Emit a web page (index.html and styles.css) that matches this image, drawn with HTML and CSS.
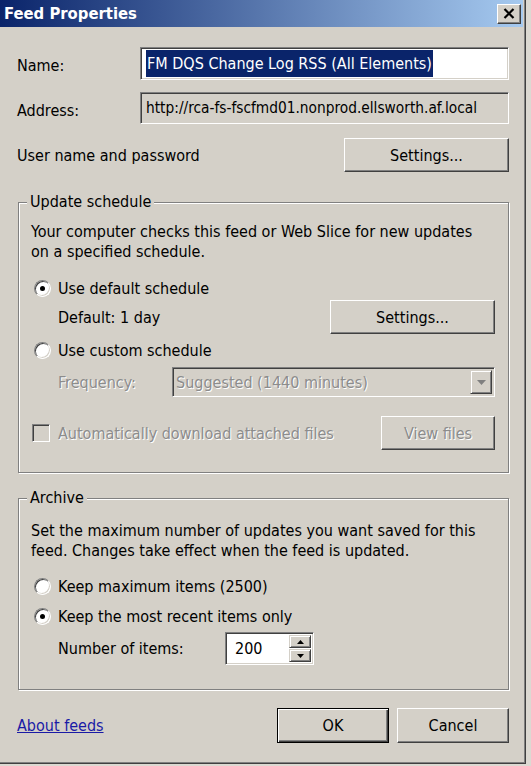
FILE: index.html
```html
<!DOCTYPE html>
<html>
<head>
<meta charset="utf-8">
<title>Feed Properties</title>
<link rel="stylesheet" href="styles.css">
</head>
<body>
<div class="window">
  <div class="titlebar">
    <span class="title">Feed Properties</span>
    <span class="close"><svg width="12" height="11" viewBox="0 0 12 11"><path d="M1.5 1 L10.5 10 M10.5 1 L1.5 10" stroke="#000" stroke-width="2.2"/></svg></span>
  </div>
  <div class="content">
    <div class="row row-name">
      <span class="label">Name:</span>
      <div class="field field-white"><span class="selected">FM DQS Change Log RSS (All Elements)</span></div>
    </div>
    <div class="row row-address">
      <span class="label">Address:</span>
      <div class="field field-readonly"><span class="address">http://rca-fs-fscfmd01.nonprod.ellsworth.af.local</span></div>
    </div>
    <div class="row row-user">
      <span>User name and password</span>
      <button class="btn btn-user">Settings...</button>
    </div>

    <div class="group group-update">
      <span class="legend">Update schedule</span>
      <p class="desc">Your computer checks this feed or Web Slice for new updates<br>on a specified schedule.</p>
      <div class="opt opt-1"><span class="radio checked"></span><span>Use default schedule</span></div>
      <div class="sub sub-default"><span>Default: 1 day</span><button class="btn btn-sched">Settings...</button></div>
      <div class="opt opt-2"><span class="radio"></span><span>Use custom schedule</span></div>
      <div class="sub sub-freq">
        <span class="freq-label disabled">Frequency:</span>
        <div class="select">
          <span class="select-text disabled">Suggested (1440 minutes)</span>
          <span class="select-btn"><svg width="9" height="5" viewBox="0 0 9 5"><path d="M0 0 H9 L4.5 5 Z" fill="#808080"/></svg></span>
        </div>
      </div>
      <div class="check-row">
        <span class="checkbox"></span>
        <span class="check-label disabled">Automatically download attached files</span>
        <button class="btn btn-view disabled">View files</button>
      </div>
    </div>

    <div class="group group-archive">
      <span class="legend">Archive</span>
      <p class="desc">Set the maximum number of updates you want saved for this<br>feed. Changes take effect when the feed is updated.</p>
      <div class="opt opt-3"><span class="radio"></span><span>Keep maximum items (2500)</span></div>
      <div class="opt opt-4"><span class="radio checked"></span><span>Keep the most recent items only</span></div>
      <div class="sub sub-num">
        <span class="num-label">Number of items:</span>
        <div class="spin">
          <span class="spin-value">200</span>
          <span class="spin-btns">
            <span class="spin-btn"><svg width="7" height="4" viewBox="0 0 7 4"><path d="M3.5 0 L7 4 H0 Z" fill="#000"/></svg></span>
            <span class="spin-btn"><svg width="7" height="4" viewBox="0 0 7 4"><path d="M0 0 H7 L3.5 4 Z" fill="#000"/></svg></span>
          </span>
        </div>
      </div>
    </div>

    <div class="bottom">
      <a class="link" href="#">About feeds</a>
      <div class="actions">
        <button class="btn btn-default">OK</button>
        <button class="btn btn-cancel">Cancel</button>
      </div>
    </div>
  </div>
</div>
</body>
</html>
```
FILE: styles.css
```css
* { box-sizing: border-box; }
html, body { margin: 0; padding: 0; }
body {
  width: 531px;
  height: 766px;
  overflow: hidden;
  background: #dcd9d2;
  font-family: "DejaVu Sans Condensed", "DejaVu Sans", sans-serif;
  font-size: 16px;
  color: #000;
}
.window {
  width: 526px;
  height: 764px;
  background: #d4d0c8;
  box-shadow: inset -1px -1px #404040, inset -2px -2px #808080;
  display: flex;
  flex-direction: column;
}
.titlebar {
  height: 27px;
  margin-right: 3px;
  background: linear-gradient(to right, #0a246a, #a6caf0);
  display: flex;
  align-items: center;
  justify-content: space-between;
  padding: 0 2px 0 4px;
}
.title {
  color: #fff;
  font-weight: bold;
  font-size: 16.5px;
}
.close {
  width: 24px;
  height: 20px;
  background: #d4d0c8;
  border: 1px solid;
  border-color: #fff #404040 #404040 #fff;
  box-shadow: inset -1px -1px #808080;
  display: flex;
  align-items: center;
  justify-content: center;
}
.content {
  padding: 0 17px;
  display: flex;
  flex-direction: column;
}
.row {
  display: flex;
  align-items: center;
}
.label { width: 123px; flex: none; padding-top: 4px; }
.row-name { margin-top: 20px; height: 33px; }
.row-address { margin-top: 12px; height: 32px; }
.row-user { margin-top: 14px; height: 34px; justify-content: space-between; }
.field {
  flex: 1;
  height: 100%;
  border: 1px solid;
  border-color: #808080 #fff #fff #808080;
  box-shadow: inset 1px 1px #404040, inset -1px -1px #d4d0c8;
  padding: 2px 5px;
  white-space: nowrap;
  overflow: hidden;
  display: flex;
  align-items: center;
}
.field-white { background: #fff; }
.field-readonly { background: #d4d0c8; }
.address { font-size: 15.3px; }
.selected {
  background: #0a246a;
  color: #fff;
  height: 100%;
  display: flex;
  align-items: center;
  padding: 0 1px;
}
.btn {
  font: inherit;
  color: #000;
  background: #d4d0c8;
  border: 1px solid;
  border-color: #fff #404040 #404040 #fff;
  box-shadow: inset -1px -1px #808080;
  padding: 0;
  height: 100%;
}
.btn-user { width: 165px; }
.group {
  position: relative;
  margin-left: 1px;
  border: 1px solid #808080;
  box-shadow: inset 1px 1px #fff, 1px 1px #fff;
  padding-left: 12px;
  padding-right: 13px;
  display: flex;
  flex-direction: column;
}
.legend {
  position: absolute;
  top: -10px;
  left: 8px;
  padding: 0 3px;
  line-height: 18px;
  background: #d4d0c8;
}
.group-update { margin-top: 30px; padding-top: 19px; padding-bottom: 22px; }
.group-archive { margin-top: 25px; padding-top: 22px; padding-bottom: 24px; }
.desc { margin: 0; line-height: 20px; }
.opt {
  height: 20px;
  display: flex;
  align-items: center;
  padding-left: 3px;
}
.opt-1 { margin-top: 16px; }
.opt-2 { margin-top: 6px; }
.opt-3 { margin-top: 15px; }
.opt-4 { margin-top: 10px; }
.radio {
  width: 17px;
  height: 17px;
  border-radius: 50%;
  border: 1px solid;
  border-color: #808080 #fff #fff #808080;
  background: #fff;
  box-shadow: inset 1px 1px #404040, inset -1px -1px #d4d0c8;
  margin-right: 7px;
  flex: none;
  display: flex;
  align-items: center;
  justify-content: center;
}
.radio.checked::after {
  content: "";
  width: 5px;
  height: 5px;
  border-radius: 50%;
  background: #000;
}
.sub {
  display: flex;
  align-items: center;
  padding-left: 27px;
}
.sub-default { margin-top: 2px; height: 34px; justify-content: space-between; }
.btn-sched { width: 165px; }
.sub-freq { margin-top: 7px; height: 30px; }
.freq-label { width: 114px; flex: none; }
.disabled {
  color: #8c8c8c;
  text-shadow: 1px 1px #fff;
}
.select {
  flex: 1;
  height: 100%;
  border: 1px solid;
  border-color: #808080 #fff #fff #808080;
  box-shadow: inset 1px 1px #404040, inset -1px -1px #d4d0c8;
  background: #d4d0c8;
  display: flex;
  align-items: center;
  justify-content: space-between;
  padding: 2px 2px 2px 3px;
}
.select-btn {
  width: 22px;
  height: 100%;
  border: 1px solid;
  border-color: #d4d0c8 #404040 #404040 #d4d0c8;
  box-shadow: inset 1px 1px #fff, inset -1px -1px #808080;
  display: flex;
  align-items: center;
  justify-content: center;
}
.check-row {
  margin-top: 19px;
  height: 34px;
  display: flex;
  align-items: center;
  padding-left: 1px;
}
.checkbox {
  width: 18px;
  height: 18px;
  flex: none;
  border: 1px solid;
  border-color: #808080 #fff #fff #808080;
  box-shadow: inset 1px 1px #404040, inset -1px -1px #d4d0c8;
  background: #d4d0c8;
  margin-right: 8px;
}
.check-label { flex: 1; }
.btn-view { width: 114px; }
.sub-num { margin-top: 6px; height: 33px; }
.num-label { width: 167px; flex: none; }
.spin {
  width: 89px;
  height: 100%;
  border: 1px solid;
  border-color: #808080 #fff #fff #808080;
  box-shadow: inset 1px 1px #404040, inset -1px -1px #d4d0c8;
  background: #fff;
  display: flex;
  align-items: center;
  padding: 2px 2px 2px 9px;
}
.spin-value { flex: 1; }
.spin-btns {
  width: 22px;
  height: 100%;
  display: flex;
  flex-direction: column;
  gap: 1px;
}
.spin-btn {
  flex: 1;
  background: #d4d0c8;
  border: 1px solid;
  border-color: #d4d0c8 #404040 #404040 #d4d0c8;
  box-shadow: inset 1px 1px #fff, inset -1px -1px #808080;
  display: flex;
  align-items: center;
  justify-content: center;
}
.bottom {
  margin-top: 18px;
  height: 35px;
  display: flex;
  align-items: center;
  justify-content: space-between;
}
.link {
  color: #1a1aa6;
  text-decoration: underline;
}
.actions {
  height: 100%;
  display: flex;
  gap: 8px;
}
.btn-default, .btn-cancel { width: 112px; }
.btn-default {
  border: 1px solid #000;
  box-shadow: inset 1px 1px #fff, inset -1px -1px #404040, inset -2px -2px #808080;
}
```
